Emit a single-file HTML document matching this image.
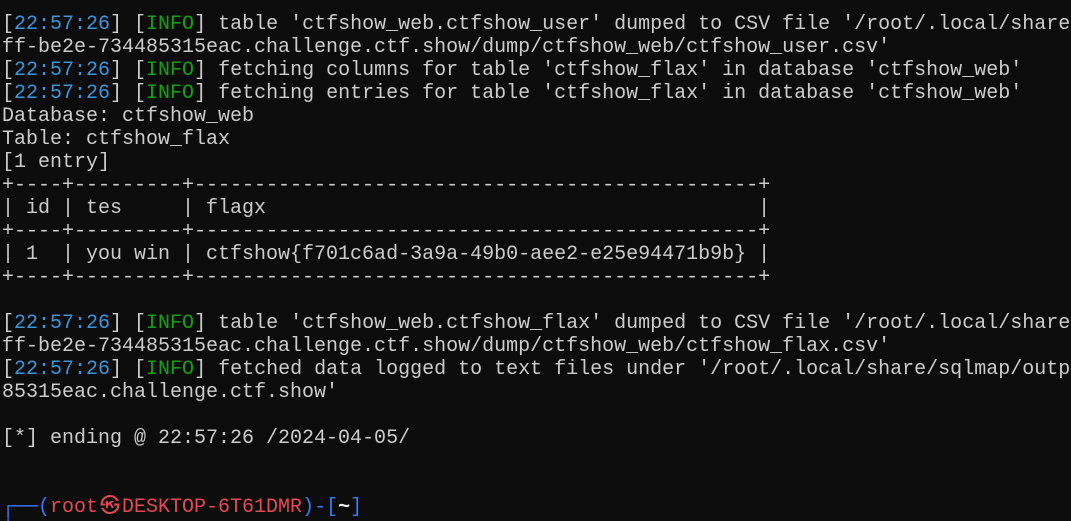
<!DOCTYPE html>
<html><head><meta charset="utf-8"><style>
html,body{margin:0;padding:0;background:#0c0c0c;width:1071px;height:521px;overflow:hidden}
pre{margin:0;padding:13px 0 0 2px;font-family:"Liberation Mono","DejaVu Sans Mono",monospace;font-size:20px;line-height:23px;color:#cccccc;white-space:pre}
.b{color:#3a96dd}.g{color:#13a10e}.r{color:#e74856}.p{color:#3b78ff}.w{color:#f2f2f2;font-weight:bold}
.k{display:inline-block;width:24px;text-align:center}
</style></head><body><pre>[<span class="b">22:57:26</span>] [<span class="g">INFO</span>] table 'ctfshow_web.ctfshow_user' dumped to CSV file '/root/.local/share
ff-be2e-734485315eac.challenge.ctf.show/dump/ctfshow_web/ctfshow_user.csv'
[<span class="b">22:57:26</span>] [<span class="g">INFO</span>] fetching columns for table 'ctfshow_flax' in database 'ctfshow_web'
[<span class="b">22:57:26</span>] [<span class="g">INFO</span>] fetching entries for table 'ctfshow_flax' in database 'ctfshow_web'
Database: ctfshow_web
Table: ctfshow_flax
[1 entry]
+----+---------+-----------------------------------------------+
| id | tes     | flagx                                         |
+----+---------+-----------------------------------------------+
| 1  | you win | ctfshow{f701c6ad-3a9a-49b0-aee2-e25e94471b9b} |
+----+---------+-----------------------------------------------+

[<span class="b">22:57:26</span>] [<span class="g">INFO</span>] table 'ctfshow_web.ctfshow_flax' dumped to CSV file '/root/.local/share
ff-be2e-734485315eac.challenge.ctf.show/dump/ctfshow_web/ctfshow_flax.csv'
[<span class="b">22:57:26</span>] [<span class="g">INFO</span>] fetched data logged to text files under '/root/.local/share/sqlmap/outp
85315eac.challenge.ctf.show'

[*] ending @ 22:57:26 /2024-04-05/


<span class="p">┌──(</span><span class="r">root<span class="k">㉿</span>DESKTOP-6T61DMR</span><span class="p">)-[</span><span class="w">~</span><span class="p">]</span>
<span class="p">│</span></pre></body></html>
